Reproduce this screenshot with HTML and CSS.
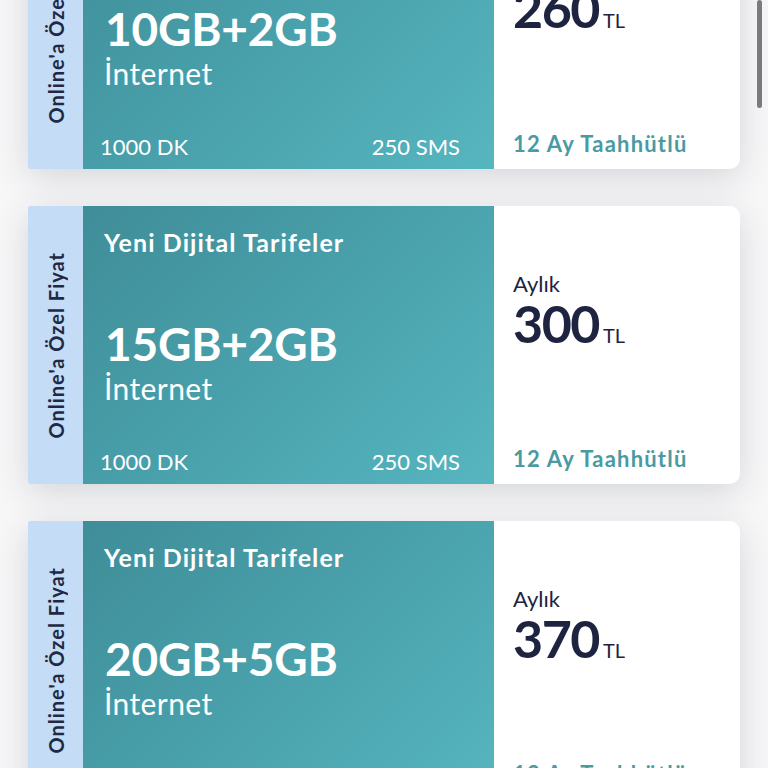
FILE: index.html
```html
<!DOCTYPE html>
<html lang="tr">
<head>
<meta charset="utf-8">
<link rel="stylesheet" href="styles.css">
</head>
<body>
<div class="list">
  <div class="card">
    <div class="strip"><span class="strip-text">Online'a Özel Fiyat</span></div>
    <div class="main">
      <div class="title">Yeni Dijital Tarifeler</div>
      <div class="data">10GB+2GB</div>
      <div class="data-label">İnternet</div>
      <div class="extras"><span>1000 DK</span><span>250 SMS</span></div>
    </div>
    <div class="price">
      <div class="monthly">Aylık</div>
      <div class="amount">260<span class="cur">TL</span></div>
      <div class="commit">12 Ay Taahhütlü</div>
    </div>
  </div>
  <div class="card">
    <div class="strip"><span class="strip-text">Online'a Özel Fiyat</span></div>
    <div class="main">
      <div class="title">Yeni Dijital Tarifeler</div>
      <div class="data">15GB+2GB</div>
      <div class="data-label">İnternet</div>
      <div class="extras"><span>1000 DK</span><span>250 SMS</span></div>
    </div>
    <div class="price">
      <div class="monthly">Aylık</div>
      <div class="amount">300<span class="cur">TL</span></div>
      <div class="commit">12 Ay Taahhütlü</div>
    </div>
  </div>
  <div class="card">
    <div class="strip"><span class="strip-text">Online'a Özel Fiyat</span></div>
    <div class="main">
      <div class="title">Yeni Dijital Tarifeler</div>
      <div class="data">20GB+5GB</div>
      <div class="data-label">İnternet</div>
      <div class="extras"><span>1000 DK</span><span>250 SMS</span></div>
    </div>
    <div class="price">
      <div class="monthly">Aylık</div>
      <div class="amount">370<span class="cur">TL</span></div>
      <div class="commit">12 Ay Taahhütlü</div>
    </div>
  </div>
</div>
<div class="scrollbar"></div>
</body>
</html>
```
FILE: styles.css
```css
html, body {
  margin: 0;
  padding: 0;
  height: 768px;
  overflow: hidden;
  background: #f7f7f8;
  font-family: "Lato", "Noto Sans", sans-serif;
}
.list {
  display: flex;
  flex-direction: column;
  gap: 37px;
  margin-top: -109px;
  padding-left: 28px;
  width: 712px;
}
.card {
  display: flex;
  height: 278px;
  border-radius: 2px 10px 10px 2px;
  overflow: hidden;
  background: #fff;
  box-shadow: 0 8px 34px rgba(40, 45, 60, 0.16);
}
.strip {
  width: 55px;
  flex: none;
  background: #c4dcf6;
  display: flex;
  align-items: center;
  justify-content: center;
}
.strip-text {
  writing-mode: vertical-rl;
  transform: rotate(180deg);
  font-size: 20px;
  font-weight: 700;
  color: #1e2a45;
  letter-spacing: 1px;
  white-space: nowrap;
}
.main {
  width: 411px;
  flex: none;
  box-sizing: border-box;
  padding: 20px 34px 9px 20px;
  background: linear-gradient(135deg, #3f8d98 0%, #4aa3ad 55%, #56b6c0 100%);
  color: #fff;
  display: flex;
  flex-direction: column;
}
.title {
  font-size: 25px;
  font-weight: 700;
  line-height: 32px;
  letter-spacing: 1.1px;
  margin-left: 1px;
}
.data {
  margin-top: 62px;
  font-size: 46px;
  font-weight: 700;
  line-height: 48px;
  letter-spacing: -0.2px;
  margin-left: 2px;
}
.data-label {
  margin-top: 3px;
  font-size: 30px;
  line-height: 34px;
  letter-spacing: 0.4px;
  margin-left: 1px;
}
.extras {
  margin-top: auto;
  display: flex;
  justify-content: space-between;
  font-size: 22px;
  line-height: 26px;
  margin-left: -3px;
}
.price {
  flex: 1;
  padding: 67px 18px 12px 19px;
  display: flex;
  flex-direction: column;
  color: #1e2440;
}
.monthly {
  font-size: 22px;
  line-height: 22px;
}
.amount {
  font-size: 52px;
  font-weight: 700;
  line-height: 56px;
  letter-spacing: -1.5px;
}
.cur {
  font-size: 20px;
  font-weight: 400;
  margin-left: 4px;
  letter-spacing: 0;
}
.commit {
  margin-top: auto;
  font-size: 22px;
  font-weight: 700;
  line-height: 26px;
  letter-spacing: 1.2px;
  color: #4a9aa3;
}
.scrollbar {
  position: fixed;
  top: 0;
  right: 6px;
  width: 5px;
  height: 108px;
  border-radius: 3px;
  background: #7a7a7c;
}
```
